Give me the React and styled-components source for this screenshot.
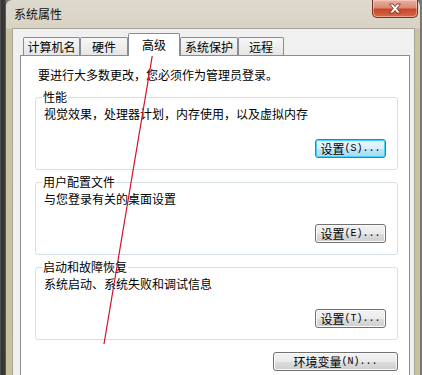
import React from "react";
import styled, { createGlobalStyle } from "styled-components";

const GlobalStyle = createGlobalStyle`
  html, body {
    margin: 0;
    padding: 0;
    overflow: hidden;
    background: #3c3c3c;
  }
  body {
    font-family: "Noto Sans CJK SC", "Noto Sans", sans-serif;
    font-size: 12px;
    color: #000;
  }
`;

const tabs = [
  { label: "计算机名", width: 57 },
  { label: "硬件", width: 48 },
  { label: "高级", width: 52, active: true },
  { label: "系统保护", width: 58 },
  { label: "远程", width: 46 },
];

const groups = [
  {
    title: "性能",
    desc: "视觉效果，处理器计划，内存使用，以及虚拟内存",
    label: "设置",
    key: "(S)...",
    focused: true,
  },
  { title: "用户配置文件", desc: "与您登录有关的桌面设置", label: "设置", key: "(E)..." },
  { title: "启动和故障恢复", desc: "系统启动、系统失败和调试信息", label: "设置", key: "(T)..." },
];

function CloseIcon() {
  return (
    <svg width="14" height="11" viewBox="0 0 14 11">
      <path
        d="M1.5 1 L5 1 L7 3.6 L9 1 L12.5 1 L8.8 5.5 L12.5 10 L9 10 L7 7.4 L5 10 L1.5 10 L5.2 5.5 Z"
        fill="#fff"
        stroke="#6b2a1e"
        strokeWidth="0.8"
        strokeLinejoin="round"
      />
    </svg>
  );
}

function Arrow() {
  return (
    <Overlay width="422" height="375" viewBox="0 0 422 375">
      <line x1="104" y1="344" x2="153.4" y2="49" stroke="#d0102a" strokeWidth="1.2" />
      <polygon points="154.6,41 150,51 157.6,51" fill="#d0102a" />
    </Overlay>
  );
}

export default function App() {
  return (
    <Screen>
      <GlobalStyle />
      <Window>
        <TitleBar>
          <Title>系统属性</Title>
          <CloseButton>
            <CloseIcon />
          </CloseButton>
        </TitleBar>
        <Body>
          <TabRow>
            {tabs.map((t) => (
              <Tab key={t.label} $active={t.active} $width={t.width}>
                {t.label}
              </Tab>
            ))}
          </TabRow>
          <Panel>
            <Intro>要进行大多数更改，您必须作为管理员登录。</Intro>
            <Groups>
              {groups.map((g) => (
                <Group key={g.title}>
                  <Legend>{g.title}</Legend>
                  <Desc>{g.desc}</Desc>
                  <ButtonRow>
                    <Button $focused={g.focused} $width={71}>
                      {g.label}
                      <Key>{g.key}</Key>
                    </Button>
                  </ButtonRow>
                </Group>
              ))}
            </Groups>
            <EnvRow>
              <Button $width={125}>
                环境变量<Key>(N)...</Key>
              </Button>
            </EnvRow>
          </Panel>
        </Body>
      </Window>
      <Arrow />
    </Screen>
  );
}

const Screen = styled.div`
  position: relative;
  width: 422px;
  height: 375px;
  overflow: hidden;
  box-sizing: border-box;
  padding: 0 2px 0 6px;
  background: linear-gradient(90deg, #6a6a6a 0, #333 1px, #3a3a3a 5px, #777 6px);
  display: flex;
`;

const Window = styled.div`
  flex: 1;
  height: 400px;
  display: flex;
  flex-direction: column;
  border-radius: 6px 6px 0 0;
  background: linear-gradient(180deg, #ddd9cd 0, #d8d3c4 28px, #cbc2a0 29px, #c9c09c 100%);
`;

const TitleBar = styled.div`
  height: 28px;
  display: flex;
  justify-content: space-between;
  align-items: flex-start;
  padding-left: 8px;
`;

const Title = styled.div`
  line-height: 28px;
  font-size: 12px;
  color: #111;
`;

const CloseButton = styled.div`
  width: 46px;
  height: 18px;
  box-sizing: border-box;
  margin-right: 2px;
  border: 1px solid #7a2f22;
  border-top: none;
  border-radius: 0 0 5px 5px;
  background: linear-gradient(180deg, #eab2a2 0, #dc8a72 45%, #c9452c 55%, #d66a48 100%);
  box-shadow: inset 0 0 0 1px rgba(255, 220, 210, 0.5);
  display: flex;
  align-items: center;
  justify-content: center;
`;

const Body = styled.div`
  flex: 1;
  margin: 0 5px 0 6px;
  border: 1px solid #a7a49a;
  border-bottom: none;
  background: #f0f0f0;
  padding: 4px 4px 0 7px;
  display: flex;
  flex-direction: column;
`;

const TabRow = styled.div`
  height: 22px;
  display: flex;
  align-items: flex-end;
  padding-left: 3px;
`;

const Tab = styled.div`
  width: ${(p) => p.$width}px;
  height: ${(p) => (p.$active ? 23 : 18)}px;
  margin-bottom: ${(p) => (p.$active ? -1 : 0)}px;
  box-sizing: border-box;
  border: 1px solid #898c95;
  border-bottom: none;
  border-radius: 2px 2px 0 0;
  background: ${(p) => (p.$active ? "#fff" : "linear-gradient(180deg, #f7f7f7, #e5e5e5)")};
  position: relative;
  z-index: ${(p) => (p.$active ? 1 : 0)};
  display: flex;
  align-items: center;
  justify-content: center;
  font-size: 12px;
  line-height: 14px;
`;

const Panel = styled.div`
  flex: 1;
  background: #fff;
  border: 1px solid #898c95;
  border-bottom: none;
  padding: 12px 11px 0 14px;
`;

const Intro = styled.div`
  margin-left: 3px;
  line-height: 14px;
`;

const Groups = styled.div`
  margin-top: 8px;
  display: flex;
  flex-direction: column;
  gap: 5px;
`;

const Group = styled.fieldset`
  margin: 0;
  min-width: 0;
  border: 1px solid #d5dfe5;
  border-radius: 3px;
  padding: 3px 11px 11px 8px;
`;

const Legend = styled.legend`
  margin-left: -2px;
  padding: 0 1px;
  line-height: 14px;
  font-size: 12px;
`;

const Desc = styled.div`
  line-height: 14px;
`;

const ButtonRow = styled.div`
  margin-top: 18px;
  display: flex;
  justify-content: flex-end;
`;

const Button = styled.div`
  width: ${(p) => p.$width}px;
  height: 19px;
  box-sizing: border-box;
  border: 1px solid ${(p) => (p.$focused ? "#3c7fb1" : "#707070")};
  border-radius: 3px;
  background: ${(p) =>
    p.$focused
      ? "linear-gradient(180deg, #eaf6fd 0, #d9f0fc 50%, #bee6fd 51%, #a7d9f5 100%)"
      : "linear-gradient(180deg, #f2f2f2 0, #ebebeb 50%, #dddddd 51%, #cfcfcf 100%)"};
  box-shadow: inset 0 0 0 1px ${(p) => (p.$focused ? "#48d2f8" : "#fbfbfb")};
  display: flex;
  align-items: center;
  justify-content: center;
  line-height: 14px;
  font-size: 12px;
`;

const Key = styled.span`
  font-family: "Liberation Mono", monospace;
  font-size: 10px;
`;

const EnvRow = styled.div`
  margin-top: 12px;
  display: flex;
  justify-content: flex-end;
`;

const Overlay = styled.svg`
  position: absolute;
  left: 0;
  top: 0;
  pointer-events: none;
`;
